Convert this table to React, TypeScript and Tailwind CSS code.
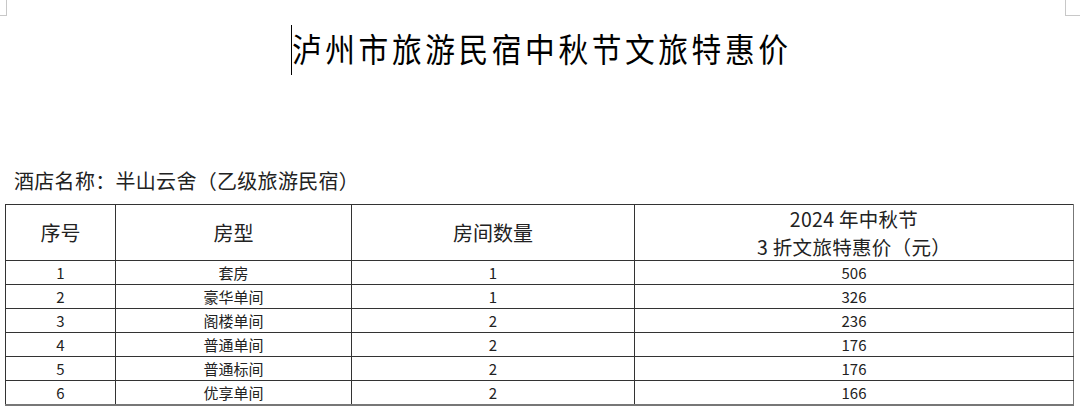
const rows = [
  { no: "1", type: "套房", count: "1", price: "506" },
  { no: "2", type: "豪华单间", count: "1", price: "326" },
  { no: "3", type: "阁楼单间", count: "2", price: "236" },
  { no: "4", type: "普通单间", count: "2", price: "176" },
  { no: "5", type: "普通标间", count: "2", price: "176" },
  { no: "6", type: "优享单间", count: "2", price: "166" },
];

export default function App() {
  return (
    <main
      className="relative w-[1080px] h-[413px] bg-white overflow-hidden text-[#1a1a1a]"
      style={{ fontFamily: '"Noto Sans CJK SC", "Noto Sans", sans-serif' }}
    >
      {/* page corner marks */}
      <div className="absolute left-0 top-0 w-[7px] h-[16px] border-r border-b border-[#c8c8c8]" />
      <div className="absolute left-[1065px] top-0 w-[15px] h-[16px] border-l border-b border-[#c8c8c8]" />

      <div className="flex justify-center items-center mt-[25px] h-[50px]">
        <div className="w-[1.5px] h-[50px] bg-black" />
        <h1 className="text-[33px] leading-none tracking-[4px] text-black scale-x-[0.9] origin-left -mr-[58px] -mt-[4px]">
          泸州市旅游民宿中秋节文旅特惠价
        </h1>
      </div>

      <p className="mt-[92px] pl-[14px] text-[20px] leading-[28px] tracking-[0.3px] text-[#222]">
        酒店名称：半山云舍（乙级旅游民宿）
      </p>

      <table className="ml-[5px] mt-[9px] w-[1068px] table-fixed border-collapse text-[#222]">
        <colgroup>
          <col className="w-[110px]" />
          <col className="w-[236px]" />
          <col className="w-[283px]" />
          <col className="w-[439px]" />
        </colgroup>
        <thead>
          <tr className="h-[55px] text-[20px]">
            <th className="font-normal border border-[#333]">序号</th>
            <th className="font-normal border border-[#333]">房型</th>
            <th className="font-normal border border-[#333]">房间数量</th>
            <th className="font-normal border border-[#333] border-r-[#777] text-[19.5px] leading-[27.5px] tracking-[0.3px] py-0">
              <div>2024 年中秋节</div>
              <div>3 折文旅特惠价（元）</div>
            </th>
          </tr>
        </thead>
        <tbody className="text-[15px]">
          {rows.map((r, i) => (
            <tr
              key={r.no}
              className={i === rows.length - 1 ? "h-[24px] border-b-2 border-[#777]" : "h-[24px]"}
            >
              <td className="text-center leading-none border border-[#333]">{r.no}</td>
              <td className="text-center leading-none border border-[#333]">{r.type}</td>
              <td className="text-center leading-none border border-[#333]">{r.count}</td>
              <td className="text-center leading-none border border-[#333] border-r-[#777]">{r.price}</td>
            </tr>
          ))}
        </tbody>
      </table>
    </main>
  );
}
